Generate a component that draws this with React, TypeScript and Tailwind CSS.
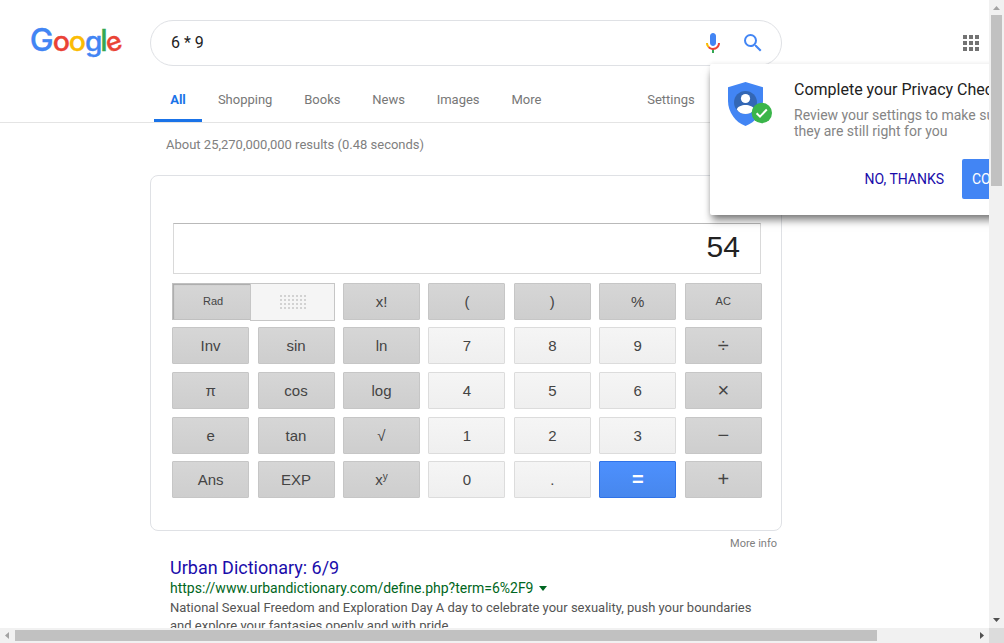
import React from "react";
import { MdSearch } from "react-icons/md";

const sans = "font-['Roboto','Noto_Sans',sans-serif]";
const arial = "font-['Liberation_Sans',Arial,sans-serif]";

const logoLetters = [
  { ch: "G", x: 11.7, y: 23.7, size: 31, sx: 1.03, fill: "#4285f4", rot: 0 },
  { ch: "o", x: 31.5, y: 23.7, size: 26.5, sx: 1.08, fill: "#ea4335", rot: 0 },
  { ch: "o", x: 47.5, y: 23.7, size: 26.5, sx: 1.08, fill: "#fbbc05", rot: 0 },
  { ch: "g", x: 63.6, y: 23.7, size: 26.5, sx: 1.06, fill: "#4285f4", rot: 0 },
  { ch: "l", x: 74, y: 23.7, size: 29.5, sx: 1, fill: "#34a853", rot: 0 },
  { ch: "e", x: 84, y: 23.7, size: 26.5, sx: 1.02, fill: "#ea4335", rot: -20 },
];

function Logo() {
  return (
    <svg width="96" height="34" viewBox="0 0 96 34" className="block overflow-visible font-['Inter',sans-serif] font-medium" aria-label="Google">
      {logoLetters.map((l, i) => (
        <text
          key={i}
          fontSize={l.size}
          fill={l.fill}
          stroke={l.fill}
          strokeWidth="0.3"
          textAnchor="middle"
          transform={`translate(${l.x} ${l.y}) rotate(${l.rot} 0 -7.5) scale(${l.sx} 1)`}
        >
          {l.ch}
        </text>
      ))}
    </svg>
  );
}

function Mic() {
  return (
    <svg width="24" height="24" viewBox="0 0 24 24">
      <path fill="#4285f4" d="m12 15c1.66 0 3-1.31 3-2.97v-7.02c0-1.66-1.34-3.01-3-3.01s-3 1.34-3 3.01v7.02c0 1.66 1.34 2.97 3 2.97z" />
      <path fill="#34a853" d="m11 18.08h2v3.92h-2z" />
      <path fill="#fbbc05" d="m7.05 16.87c-1.27-1.33-2.05-2.83-2.05-4.87h2c0 1.45 0.56 2.42 1.47 3.38v0.32l-1.15 1.18z" />
      <path fill="#ea4335" d="m12 16.93a4.97 5.25 0 0 1 -3.54 -1.55l-1.41 1.49c1.26 1.34 3.02 2.13 4.95 2.13 3.87 0 6.99-2.92 6.99-7h-1.99c0 2.92-2.24 4.93-5 4.93z" />
    </svg>
  );
}

function Apps() {
  return (
    <div className="grid grid-cols-[repeat(3,4px)] grid-rows-[repeat(3,4px)] gap-[2px]">
      {Array.from({ length: 9 }, (_, i) => (
        <span key={i} className="bg-[#737373]" />
      ))}
    </div>
  );
}

function Shield() {
  return (
    <svg width="46" height="46" viewBox="0 0 46 46" className="block">
      <path fill="#4285f4" d="M17.5 0 L35 5.2 V19 C35 30 27.500 40.500 17.500 44 C7.500 40.500 0 30 0 19 V5.200 Z" />
      <circle cx="17.500" cy="20.500" r="11.500" fill="#3367b5" />
      <circle cx="17.500" cy="16.500" r="4.600" fill="#fff" />
      <path fill="#fff" d="M8.800 27.500 C9.500 24.500 13.500 23 17.500 23 C21.500 23 25.500 24.500 26.200 27.500 C24.200 30.500 21 32 17.500 32 C14 32 10.800 30.500 8.800 27.500 Z" />
      <circle cx="33.800" cy="31" r="10.200" fill="#3ab54a" />
      <path d="M28.600 31.200 L32 34.600 L38.800 27.500" fill="none" stroke="#fff" strokeWidth="2" />
    </svg>
  );
}

const tabs = ["All", "Shopping", "Books", "News", "Images", "More"];

type Key = { t: React.ReactNode; k: "d" | "l" | "b"; s?: "sm" | "op" };
const rows: Key[][] = [
  [
    { t: "x!", k: "d" }, { t: "(", k: "d" }, { t: ")", k: "d" }, { t: "%", k: "d" }, { t: "AC", k: "d", s: "sm" },
  ],
  [
    { t: "Inv", k: "d" }, { t: "sin", k: "d" }, { t: "ln", k: "d" }, { t: "7", k: "l" }, { t: "8", k: "l" }, { t: "9", k: "l" }, { t: "÷", k: "d", s: "op" },
  ],
  [
    { t: "π", k: "d" }, { t: "cos", k: "d" }, { t: "log", k: "d" }, { t: "4", k: "l" }, { t: "5", k: "l" }, { t: "6", k: "l" }, { t: "×", k: "d", s: "op" },
  ],
  [
    { t: "e", k: "d" }, { t: "tan", k: "d" }, { t: "√", k: "d" }, { t: "1", k: "l" }, { t: "2", k: "l" }, { t: "3", k: "l" }, { t: "−", k: "d", s: "op" },
  ],
  [
    { t: "Ans", k: "d" }, { t: "EXP", k: "d" },
    { t: <span>x<span className="relative -top-[5px] text-[10px]">y</span></span>, k: "d" },
    { t: "0", k: "l" }, { t: ".", k: "l" }, { t: "=", k: "b", s: "op" }, { t: "+", k: "d", s: "op" },
  ],
];

const skin = {
  d: "border-[#c6c6c6] bg-linear-to-b from-[#d6d6d6] to-[#cecece] text-[#444]",
  l: "border-[#dcdcdc] bg-linear-to-b from-[#f5f5f5] to-[#efefef] text-[#444]",
  b: "border-[#2f72e8] bg-linear-to-b from-[#4d90fe] to-[#4787ed] text-white font-bold",
};

function CalcKey({ k }: { k: Key }) {
  const size = k.s === "sm" ? "text-[11px] pt-px" : k.s === "op" ? "text-[20px] pb-px" : "text-[15px]";
  return (
    <div className={`flex h-[37px] w-[77px] items-center justify-center rounded-[1px] border leading-none ${size} ${skin[k.k]}`}>
      <span>{k.t}</span>
    </div>
  );
}

function AngleKey() {
  return (
    <div className="col-span-2 flex h-[38px] w-[163px]">
      <div className="flex h-[37px] w-[78px] items-center justify-center border border-r-0 border-[#c0c0c0] bg-linear-to-b from-[#d6d6d6] to-[#cecece] pl-[3px] pt-px text-[11px] leading-none text-[#444] shadow-[inset_1px_1px_1px_#aaa]">
        Rad
      </div>
      <div className="flex h-[38px] w-[85px] items-center justify-center border border-[#c6c6c6] bg-[#f5f5f5]">
        <div className="grid grid-cols-[repeat(7,2px)] gap-[2px]">
          {Array.from({ length: 28 }, (_, i) => (
            <span key={i} className="h-[2px] bg-[#d2d2d2]" />
          ))}
        </div>
      </div>
    </div>
  );
}

function Calculator() {
  return (
    <div className={`ml-[150px] mt-[21px] h-[356px] w-[632px] rounded-lg border border-[#dfe1e5] pl-[21.1px] pt-[47px] ${arial}`}>
      <div className="ml-[0.9px] flex h-[51px] w-[588px] items-center justify-end border border-t-[#b9b9b9] border-[#d9d9d9] pb-[4px] pr-[20px] text-[30px] leading-none text-[#222]">
        54
      </div>
      <div className="mt-[8.8px] grid auto-rows-[37px] grid-cols-[repeat(7,77px)] gap-x-[8.45px] gap-y-[7.6px]">
        <AngleKey />
        {rows.flat().map((k, i) => (
          <CalcKey key={i} k={k} />
        ))}
      </div>
    </div>
  );
}

function PrivacyCard() {
  return (
    <div className="absolute left-[710px] top-[64px] flex h-[151px] w-[388px] rounded-[2px] bg-white pl-[18px] pt-[18px] shadow-[0_7px_8px_-2px_rgba(0,0,0,0.5),0_0_4px_rgba(0,0,0,0.1)]">
      <Shield />
      <div className="ml-[20px] w-[280px] shrink-0">
        <div className="-mt-[2px] whitespace-nowrap text-[16px] leading-[20px] text-[#212121]">Complete your Privacy Checkup</div>
        <div className="mt-[7px] whitespace-nowrap text-[14px] leading-[16px] text-[#858585]">
          Review your settings to make sure
          <br />
          they are still right for you
        </div>
        <div className="mt-[20px] flex h-[40px] items-center whitespace-nowrap text-[14px]">
          <span className="ml-[70.500px] w-[97.500px] shrink-0 text-[#1a0dab]">NO, THANKS</span>
          <span className="flex h-full w-[90px] shrink-0 items-center rounded-[2px] bg-[#4285f4] pl-[10px] text-white">CONTINUE</span>
        </div>
      </div>
    </div>
  );
}

function Arrow({ d, color }: { d: string; color: string }) {
  return (
    <svg width="15" height="15" viewBox="0 0 15 15" className="block shrink-0">
      <path d={d} fill={color} />
    </svg>
  );
}

export default function App() {
  return (
    <div className={`flex h-[643px] w-[1004px] flex-col overflow-hidden bg-white ${sans}`}>
      <div className="flex h-[628px]">
        <main className="relative h-full w-[989px] overflow-hidden">
          <header className="flex h-[123px] flex-col border-b border-[#e4e4e4]">
            <div className="flex h-[66px] pt-[20px]">
              <div className="w-[150px] pl-[30px] pt-[7px]">
                <Logo />
              </div>
              <div className="flex h-[46px] w-[632px] items-center rounded-full border border-[#dfe1e5] pl-[20px] pr-[16px]">
                <span className="flex-1 text-[16px] leading-none text-[#222]">6 * 9</span>
                <Mic />
                <MdSearch size={24} color="#4285f4" className="ml-4" />
              </div>
              <div className="ml-auto mr-[10px] pt-[15px]">
                <Apps />
              </div>
            </div>
            <div className="flex flex-1 items-end text-[13px] leading-[16px] text-[#777]">
              <nav className="ml-[154px] flex">
                {tabs.map((t, i) => (
                  <div key={t} className={i === 0 ? "h-[30px] w-[48px] border-b-[3px] border-[#1a73e8] text-center font-bold text-[#1a73e8]" : "h-[30px] px-[15.900px]"}>
                    {t}
                  </div>
                ))}
              </nav>
              <div className="ml-[90px] h-[30px]">Settings</div>
            </div>
          </header>
          <div className="ml-[166px] mt-[14px] h-[17px] text-[13px] leading-[16px] text-[#808080]">About 25,270,000,000 results (0.48 seconds)</div>
          <Calculator />
          <div className="mt-[5px] w-[777px] text-right text-[11px] leading-[15px] text-[#808080]">More info</div>
          <article className="ml-[170px] mt-[6px] w-[600px] whitespace-nowrap">
            <h3 className="text-[18px] leading-[22px] text-[#1a0dab]">Urban Dictionary: 6/9</h3>
            <div className="flex items-center text-[14px] leading-[18px] text-[#006621]">
              https://www.urbandictionary.com/define.php?term=6%2F9
              <svg width="8" height="5" viewBox="0 0 8 5" className="ml-[5px]">
                <path d="M0 0h8L4 5z" fill="#006621" />
              </svg>
            </div>
            <p className="mt-[2px] text-[13px] leading-[18px] text-[#545454]">
              National Sexual Freedom and Exploration Day A day to celebrate your sexuality, push your boundaries
              <br />
              and explore your fantasies openly and with pride.
            </p>
          </article>
          <PrivacyCard />
        </main>
        <div className="flex w-[15px] flex-col items-center bg-[#f1f1f1]">
          <Arrow d="M4 10h7L7.500 6z" color="#a3a3a3" />
          <div className="h-[171px] w-[11px] bg-[#c1c1c1]" />
          <div className="mt-auto">
            <Arrow d="M4 5h7L7.500 9z" color="#505050" />
          </div>
        </div>
      </div>
      <div className="flex h-[15px] items-center bg-[#f1f1f1]">
        <Arrow d="M9 4v7L5 7.500z" color="#a3a3a3" />
        <div className="h-[11px] w-[862px] bg-[#c1c1c1]" />
        <div className="ml-auto flex">
          <Arrow d="M6 4v7L10 7.500z" color="#505050" />
          <div className="size-[15px] bg-[#dcdcdc]" />
        </div>
      </div>
    </div>
  );
}
